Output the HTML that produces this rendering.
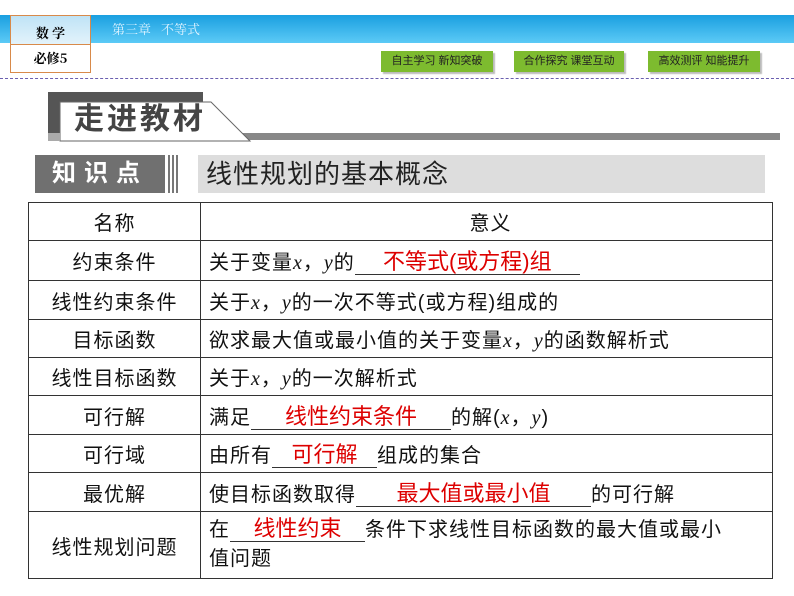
<html><head><style>
body{margin:0;width:794px;height:596px;background:#fff;position:relative;overflow:hidden;font-family:"Liberation Sans","Noto Sans CJK SC",sans-serif}
.a{position:absolute}
.btn{position:absolute;top:51px;height:21px;background:#7dbb2f;box-shadow:2px 2px 1px #bbb;font-size:11px;color:#222;text-align:center;line-height:21px}
table{position:absolute;left:28px;top:202px;width:745px;border-collapse:collapse;font-size:20px;letter-spacing:1px;color:#111}
td{border:1.5px solid #333;padding:0 0 0 8px;height:38px}
td:first-child{text-align:center;padding:0;width:171px}
.r{color:#d00;font-size:22px;display:inline-block;border-bottom:1px solid #333;text-align:center;line-height:24px;letter-spacing:0}
i{font-family:"Liberation Serif",serif}
</style></head><body>
<div class="a" style="left:0;top:15px;width:794px;height:28px;background:linear-gradient(#1a9fe0,#5ccaf6)"></div>
<div class="a" style="left:10px;top:15px;width:79px;height:28px;background:linear-gradient(#bfe3f6,#e3f3fb);border:1px solid #d88a4a;font:bold 13px 'Noto Serif CJK SC',serif;text-align:center;line-height:34px">数 学</div>
<div class="a" style="left:10px;top:44px;width:79px;height:28px;border:1px solid #d88a4a;border-top:none;font:bold 13px 'Noto Serif CJK SC',serif;text-align:center;line-height:28px">必修5</div>
<div class="a" style="left:112px;top:19px;color:#dff3ff;font:13px 'Noto Serif CJK SC',serif">第三章&nbsp;&nbsp;&nbsp;不等式</div>
<div class="btn" style="left:381px;width:112px">自主学习 新知突破</div>
<div class="btn" style="left:514px;width:110px">合作探究 课堂互动</div>
<div class="btn" style="left:648px;width:112px">高效测评 知能提升</div>
<div class="a" style="left:0;top:78px;width:794px;border-top:1.5px dashed #6a5fb0"></div>
<div class="a" style="left:48px;top:92px;width:155px;height:48px;background:#555"></div>
<div class="a" style="left:203px;top:133px;width:577px;height:7px;background:#888"></div>
<svg class="a" style="left:48px;top:92px" width="210" height="50"><polygon points="12,10 163,10 202,49 12,49" fill="#fff" stroke="#666"/><polygon points="0,41 12,41 12,49 0,49" fill="#aaa"/></svg>
<div class="a" style="left:74px;top:101px;font-size:30px;font-weight:bold;color:#444;letter-spacing:3px;line-height:38px">走进教材</div>
<div class="a" style="left:35px;top:155px;width:130px;height:38px;background:#707070;color:#fff;font-size:24px;font-weight:bold;line-height:38px;text-align:center;letter-spacing:8px">知识点</div>
<div class="a" style="left:168px;top:155px;width:12px;height:38px;background:repeating-linear-gradient(90deg,#777 0 2px,#fff 2px 4px)"></div>
<div class="a" style="left:198px;top:155px;width:567px;height:38px;background:#ddd;font-size:26px;line-height:38px;padding-left:8px;box-sizing:border-box;color:#222;letter-spacing:1px">线性规划的基本概念</div>
<table>
<tr style="height:34px"><td>名称</td><td style="text-align:center">意义</td></tr>
<tr style="height:40px"><td>约束条件</td><td>关于变量<i>x</i>，<i>y</i>的<span class="r" style="width:225px">不等式(或方程)组</span></td></tr>
<tr style="height:39px"><td>线性约束条件</td><td>关于<i>x</i>，<i>y</i>的一次不等式(或方程)组成的</td></tr>
<tr style="height:37px"><td>目标函数</td><td>欲求最大值或最小值的关于变量<i>x</i>，<i>y</i>的函数解析式</td></tr>
<tr style="height:38px"><td>线性目标函数</td><td>关于<i>x</i>，<i>y</i>的一次解析式</td></tr>
<tr style="height:39px"><td>可行解</td><td>满足<span class="r" style="width:200px">线性约束条件</span>的解(<i>x</i>，<i>y</i>)</td></tr>
<tr style="height:38px"><td>可行域</td><td>由所有<span class="r" style="width:105px">可行解</span>组成的集合</td></tr>
<tr style="height:39px"><td>最优解</td><td>使目标函数取得<span class="r" style="width:235px">最大值或最小值</span>的可行解</td></tr>
<tr style="height:67px"><td>线性规划问题</td><td style="line-height:29px">在<span class="r" style="width:135px">线性约束</span>条件下求线性目标函数的最大值或最小<br>值问题</td></tr>
</table>
</body></html>
